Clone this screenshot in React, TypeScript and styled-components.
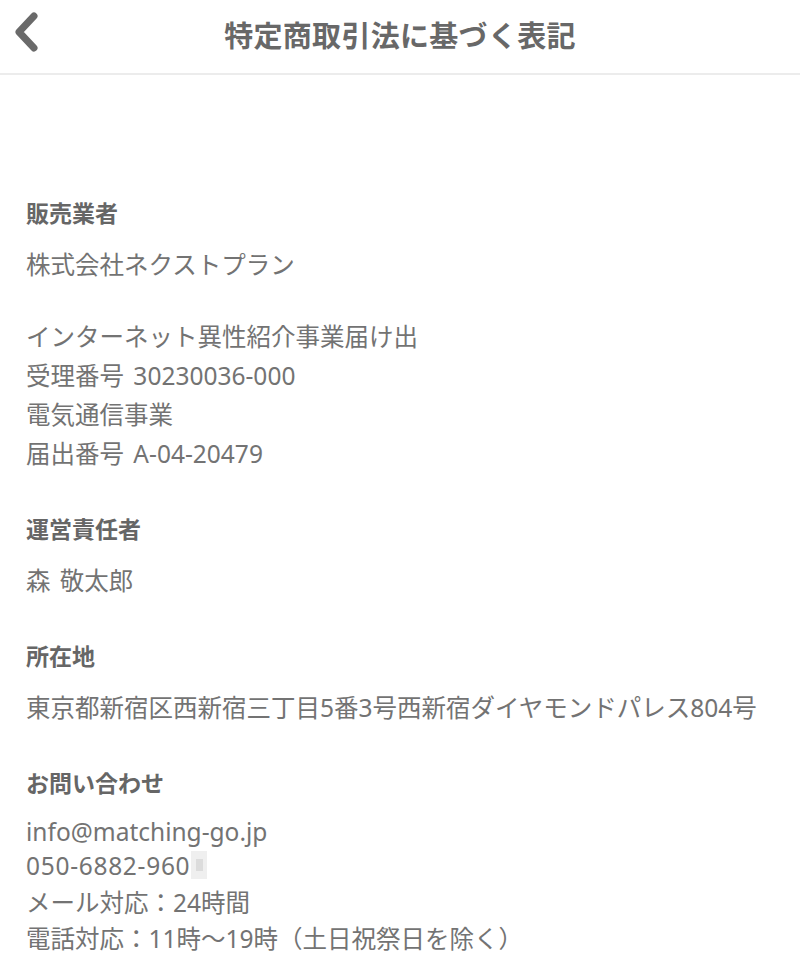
import React from 'react';
import styled, { createGlobalStyle } from 'styled-components';

const GlobalStyle = createGlobalStyle`
  html, body {
    margin: 0;
    padding: 0;
    background: #fff;
  }
  body {
    font-family: "Noto Sans", "Noto Sans CJK JP", sans-serif;
    color: #737373;
  }
`;

const sections: ISection[] = [
  {
    label: '販売業者',
    paragraphs: [
      ['株式会社ネクストプラン'],
      [
        'インターネット異性紹介事業届け出',
        '受理番号 30230036-000',
        '電気通信事業',
        '届出番号 A-04-20479',
      ],
    ],
  },
  { label: '運営責任者', paragraphs: [['森 敬太郎']] },
  {
    label: '所在地',
    paragraphs: [['東京都新宿区西新宿三丁目5番3号西新宿ダイヤモンドパレス804号']],
  },
];

const App = () => (
  <Page>
    <GlobalStyle />
    <Header>
      <BackButton aria-label="戻る">
        <svg width="28" height="40" viewBox="0 0 28 40">
          <polyline
            points="21,4 6,20 21,36"
            fill="none"
            stroke="#6a6a6a"
            strokeWidth="7"
            strokeLinecap="round"
            strokeLinejoin="round"
          />
        </svg>
      </BackButton>
      <Title>特定商取引法に基づく表記</Title>
    </Header>
    <Content>
      {sections.map((section) => (
        <Section key={section.label}>
          <Label>{section.label}</Label>
          {section.paragraphs.map((lines, i) => (
            <Paragraph key={i}>
              {lines.map((line) => (
                <div key={line}>{line}</div>
              ))}
            </Paragraph>
          ))}
        </Section>
      ))}
      <Section>
        <Label>お問い合わせ</Label>
        <Contact>
          <ContactLine $h={32}>info@matching-go.jp</ContactLine>
          <ContactLine $h={36}>
            <Phone>050-6882-960</Phone>
            <Masked />
          </ContactLine>
          <ContactLine $h={36}>メール対応：24時間</ContactLine>
          <ContactLine $h={36}>電話対応：11時〜19時（土日祝祭日を除く）</ContactLine>
        </Contact>
      </Section>
    </Content>
  </Page>
);

interface ISection {
  label: string;
  paragraphs: string[][];
}

export default App;

const Page = styled.div`
  width: 800px;
  min-height: 969px;
  background: #fff;
`;

const Header = styled.header`
  position: relative;
  height: 73px;
  display: flex;
  align-items: center;
  justify-content: center;
  border-bottom: 2px solid #ececec;
`;

const BackButton = styled.button`
  position: absolute;
  left: 11px;
  top: 10px;
  width: 32px;
  height: 44px;
  padding: 0;
  border: 0;
  background: none;
  display: flex;
  align-items: center;
  justify-content: center;
`;

const Title = styled.h1`
  margin: 0 0 6px;
  font-family: "Noto Sans CJK JP", sans-serif;
  font-size: 29px;
  font-weight: 700;
  color: #686868;
  letter-spacing: 0.3px;
`;

const Content = styled.main`
  padding: 119px 26px 20px;
  display: flex;
  flex-direction: column;
  gap: 37px;
`;

const Section = styled.section`
  display: flex;
  flex-direction: column;
  gap: 12px;
`;

const Label = styled.h2`
  margin: 0;
  font-size: 23px;
  line-height: 39px;
  font-weight: 700;
  color: #666;
`;

const Paragraph = styled.div`
  font-size: 24.5px;
  line-height: 39px;
  color: #737373;
  word-spacing: 3px;

  & + & {
    margin-top: 21px;
  }
`;

const Contact = styled.div`
  font-size: 24.5px;
  color: #737373;
`;

const ContactLine = styled.div<{ $h: number }>`
  display: flex;
  align-items: center;
  height: ${({ $h }) => $h}px;
  white-space: nowrap;
`;

const Phone = styled.span`
  letter-spacing: 0.7px;
`;

const Masked = styled.span`
  display: inline-block;
  width: 16px;
  height: 28px;
  margin-left: 1px;
  background: linear-gradient(#dcdcdc, #dcdcdc) center / 7px 12px no-repeat,
    #efefef;
`;
